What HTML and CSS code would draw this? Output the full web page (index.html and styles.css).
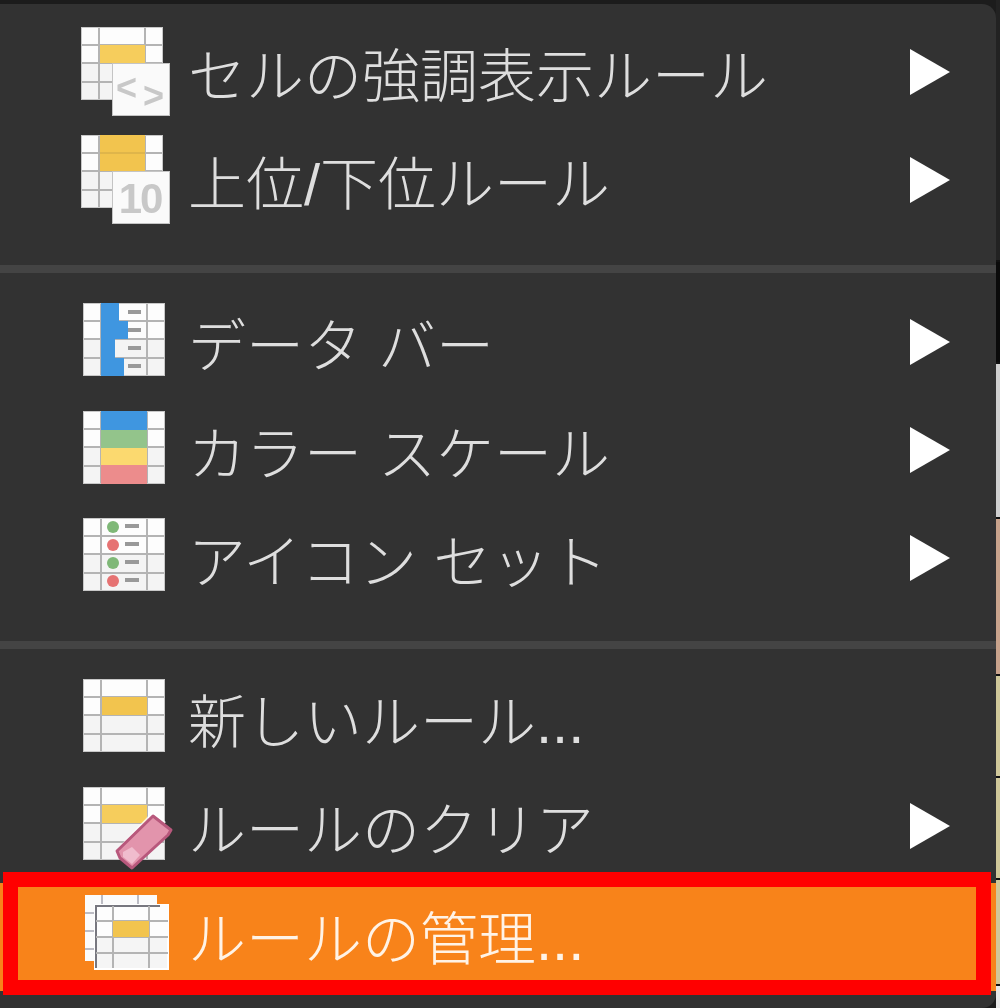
FILE: index.html
```html
<!DOCTYPE html>
<html lang="ja">
    <head>
        <meta charset="UTF-8">
        <title>条件付き書式</title>
        <link rel="stylesheet" href="styles.css">
    </head>
    <body>
        <svg class="defs" width="0" height="0">
            <defs>
                <g id="grid">
                    <rect x="0" y="0" width="82" height="73" fill="#f4f4f4"/>
                    <rect x="0" y="0" width="82" height="36" fill="#fdfdfd"/>
                    <path d="M18 0V73M64 0V73M0 18H82M0 36H82M0 55H82" stroke="#b4b4b4" stroke-width="2" fill="none"/>
                    <rect x="0.5" y="0.5" width="81" height="72" fill="none" stroke="#c8c8c8"/>
                </g>
            </defs>
        </svg>
        <div class="page">
            <div class="menu">
                <div class="item">
                    <svg class="icon" viewBox="0 0 92 108">
                        <g transform="translate(1 9)">
                            <use href="#grid"/>
                            <rect x="19" y="18" width="45" height="18" fill="#f6cd5c"/>
                        </g>
                        <rect x="32.5" y="45.5" width="57" height="52" fill="#fafafa" stroke="#c4c4c4"/>
                        <text class="glyph" x="36" y="82">&lt;</text>
                        <text class="glyph" x="63" y="90">&gt;</text>
                    </svg>
                    <span class="label">セルの強調表示ルール</span>
                    <span class="arrow"></span>
                </div>
                <div class="item">
                    <svg class="icon" viewBox="0 0 92 108">
                        <g transform="translate(1 9)">
                            <use href="#grid"/>
                            <rect x="19" y="0" width="45" height="36" fill="#f2c44e"/>
                            <path d="M19 18H64" stroke="#d8b04a" stroke-width="1.5"/>
                        </g>
                        <rect x="32.5" y="45.5" width="57" height="52" fill="#fafafa" stroke="#c4c4c4"/>
                        <text class="glyph num" x="60" y="87" text-anchor="middle">10</text>
                    </svg>
                    <span class="label">上位/下位ルール</span>
                    <span class="arrow"></span>
                </div>
                <div class="sep sep-first"></div>
                <div class="item">
                    <svg class="icon" viewBox="0 0 92 108">
                        <g transform="translate(3 15)">
                            <use href="#grid"/>
                            <path d="M18 0H36V18H45V36H32V55H41V73H18Z" fill="#3f96e0"/>
                            <path d="M45 9H58M45 27H58M45 45H58M45 63H58" stroke="#999" stroke-width="4"/>
                        </g>
                    </svg>
                    <span class="label">データ バー</span>
                    <span class="arrow"></span>
                </div>
                <div class="item">
                    <svg class="icon" viewBox="0 0 92 108">
                        <g transform="translate(3 15)">
                            <use href="#grid"/>
                            <rect x="18" y="0" width="46" height="19" fill="#3f96e0"/>
                            <rect x="18" y="19" width="46" height="18" fill="#93c48b"/>
                            <rect x="18" y="37" width="46" height="17" fill="#fbd96f"/>
                            <rect x="18" y="54" width="46" height="19" fill="#ec8c8c"/>
                        </g>
                    </svg>
                    <span class="label">カラー スケール</span>
                    <span class="arrow"></span>
                </div>
                <div class="item">
                    <svg class="icon" viewBox="0 0 92 108">
                        <g transform="translate(3 14)">
                            <use href="#grid"/>
                            <circle cx="30" cy="9" r="6" fill="#7fb877"/>
                            <circle cx="30" cy="27" r="6" fill="#e67272"/>
                            <circle cx="30" cy="45" r="6" fill="#7fb877"/>
                            <circle cx="30" cy="63" r="6" fill="#e67272"/>
                            <path d="M42 8H56M42 26H56M42 44H56M42 62H56" stroke="#999" stroke-width="4"/>
                        </g>
                    </svg>
                    <span class="label">アイコン セット</span>
                    <span class="arrow"></span>
                </div>
                <div class="sep"></div>
                <div class="item">
                    <svg class="icon" viewBox="0 0 92 108">
                        <g transform="translate(3 15)">
                            <use href="#grid"/>
                            <rect x="19" y="18" width="45" height="18" fill="#f2c44e"/>
                        </g>
                    </svg>
                    <span class="label">新しいルール...</span>
                </div>
                <div class="item">
                    <svg class="icon" viewBox="0 0 92 108">
                        <g transform="translate(3 15)">
                            <use href="#grid"/>
                            <rect x="19" y="18" width="45" height="18" fill="#f6cd5c"/>
                        </g>
                        <path d="M35 79 L72 40 L86 50 L50 92 Z" fill="#ffffff" opacity="0.75"/>
                        <path d="M73 44 L91 58 L88 63 L52 96 L40 86 L37 79 Z" fill="#e294ac" stroke="#b8587c" stroke-width="3" stroke-linejoin="round"/>
                        <path d="M43 80 L52 75 L60 83 L52 92 L43 85 Z" fill="#f0bccd"/>
                    </svg>
                    <span class="label">ルールのクリア</span>
                    <span class="arrow"></span>
                </div>
                <div class="item active">
                    <svg class="icon" viewBox="0 0 92 108">
                        <rect x="5" y="12" width="72" height="66" fill="#fbfbfb"/>
                        <path d="M5 30H16M5 48H16M5 66H16M22 12V22M58 12V22" stroke="#bcbcc4" stroke-width="2"/>
                        <rect x="15" y="22" width="73" height="64" fill="#f5f5f5" stroke="#fff" stroke-width="2"/>
                        <rect x="15" y="22" width="73" height="32" fill="#fdfdfd"/>
                        <path d="M16 85V23H80" stroke="#77777f" stroke-width="2" fill="none"/>
                        <path d="M33 23V85M69 23V85M16 38H88M16 54H88M16 70H88" stroke="#b4b4b4" stroke-width="2" fill="none"/>
                        <rect x="33" y="38" width="36" height="16" fill="#f2c44e"/>
                    </svg>
                    <span class="label">ルールの管理...</span>
                </div>
                <div class="highlight"></div>
            </div>
            <div class="strip">
                <div class="cell dark"></div>
                <div class="cell black"></div>
                <div class="cell gray"></div>
                <div class="cell pink"></div>
                <div class="cell tan"></div>
                <div class="cell tan"></div>
                <div class="cell tan last"></div>
                <div class="cell blank"></div>
            </div>
        </div>
    </body>
</html>
```

FILE: styles.css
```css
body {
	margin: 0;
	background-color: #1c1c1c;
	font-family: "Liberation Sans", "Noto Sans CJK JP", sans-serif;
}
.defs {
	position: absolute;
}
.page {
	display: flex;
	height: 1008px;
	overflow: hidden;
}
.menu {
	position: relative;
	box-sizing: border-box;
	width: 996px;
	height: 1004px;
	margin-top: 4px;
	padding-top: 14px;
	background-color: #323232;
	border-radius: 0 14px 14px 0;
}
.item {
	display: flex;
	align-items: center;
	height: 108px;
	padding-left: 80px;
}
.item.active {
	margin-top: 3px;
	background-color: #f8831a;
}
.icon {
	flex: none;
	width: 92px;
	height: 108px;
	overflow: visible;
	margin-right: 16px;
	filter: blur(0.4px);
}
.label {
	flex: 1;
	margin-top: 10px;
	font-size: 58px;
	font-weight: 300;
	line-height: 90px;
	color: #dedede;
	white-space: nowrap;
	filter: blur(0.6px);
}
.active .label {
	margin-top: 6px;
	color: #fff3e6;
}
.arrow {
	flex: none;
	width: 0;
	height: 0;
	margin-right: 46px;
	border-left: 40px solid #fff;
	border-top: 23px solid transparent;
	border-bottom: 23px solid transparent;
}
.sep {
	height: 8px;
	margin: 29px 0 15px;
	background-color: #444;
}
.sep-first {
	margin-top: 31px;
}
.glyph {
	font-family: "Liberation Sans", sans-serif;
	font-size: 36px;
	font-weight: 700;
	fill: #c8c8c8;
}
.glyph.num {
	font-size: 42px;
	letter-spacing: -2px;
}
.highlight {
	position: absolute;
	left: 3px;
	right: 5px;
	top: 868px;
	height: 123px;
	box-sizing: border-box;
	border: 15px solid #ff0000;
}
.strip {
	flex: 1;
	display: flex;
	flex-direction: column;
}
.cell {
	border-bottom: 2px solid #111;
}
.dark {
	height: 260px;
	background-color: #222;
}
.black {
	height: 100px;
	background-color: #0a0a0a;
}
.gray {
	height: 153px;
	background-color: #d0d0d0;
}
.pink {
	height: 155px;
	background-color: #c9a38c;
}
.tan {
	height: 100px;
	background-color: #d0c89a;
}
.last {
	height: 104px;
}
.blank {
	flex: 1;
	border: 0;
	background-color: #e8e8e8;
}
```
